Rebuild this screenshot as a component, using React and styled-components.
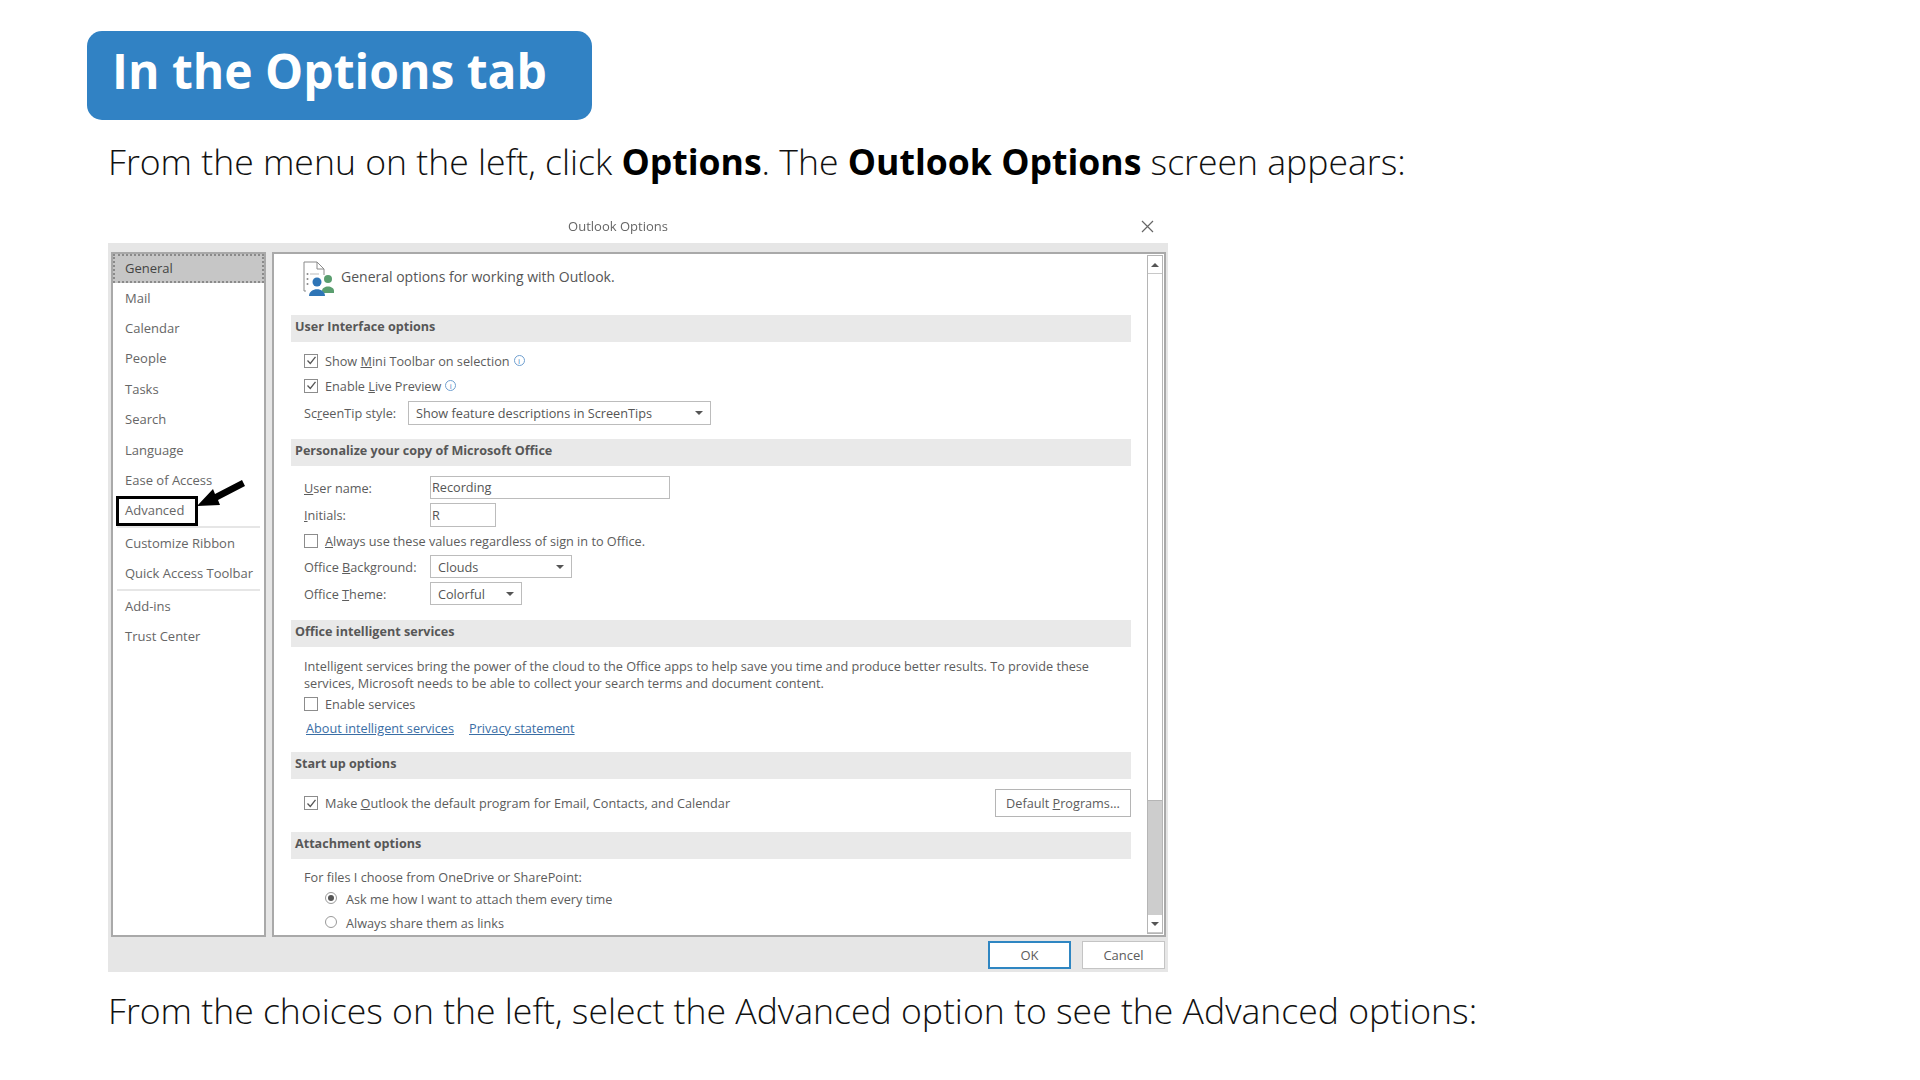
import styled, { createGlobalStyle } from 'styled-components';

const GlobalStyle = createGlobalStyle`
  html, body { margin: 0; padding: 0; background: #fff; }
  body { font-family: "Open Sans", "Liberation Sans", sans-serif; }
`;

const Page = styled.div`
  width: 1920px;
  height: 1080px;
  padding: 31px 0 0 88px;
  box-sizing: border-box;
  overflow: hidden;
`;
const Badge = styled.h1`
  width: 505px;
  height: 89px;
  margin: 0 0 0 -1px;
  padding: 0 0 11px 25px;
  box-sizing: border-box;
  display: flex;
  align-items: center;
  background: #3182c4;
  border-radius: 15px;
  color: #fff;
  font-size: 48px;
  font-weight: 700;
`;
const Lead = styled.p`
  margin: ${(p) => p.$top || 0}px 0 0 20px;
  height: 50px;
  line-height: 50px;
  font-size: 35.6px;
  font-weight: 300;
  color: #111;
  white-space: nowrap;
  b { font-weight: 700; color: #000; }
`;
const Dialog = styled.div`
  width: 1060px;
  margin: 24px 0 13px 20px;
  font-family: "Open Sans", "Noto Sans", sans-serif;
  font-size: 13px;
  color: #5c5c5c;
  filter: blur(0.5px);
`;
const TitleBar = styled.div`
  height: 33px;
  padding: 0 40px 2px 0;
  box-sizing: border-box;
  position: relative;
  display: flex;
  align-items: center;
  justify-content: center;
  font-size: 13px;
  color: #666;
  svg { position: absolute; right: 14px; top: 10px; }
`;
const Body = styled.div`
  background: #e6e6e6;
  padding: 9px 2px 0 3px;
  display: flex;
  gap: 6px;
  height: 685px;
`;
const Sidebar = styled.nav`
  width: 155px;
  box-sizing: border-box;
  border: 2px solid #a9a9a9;
  background: #fff;
  position: relative;
  flex: none;
`;
const SideItem = styled.div`
  height: ${(p) => (p.$active ? '29px' : '30.4px')};
  padding: 0 0 ${(p) => (p.$active ? '2px' : '1px')} ${(p) => (p.$active ? '10px' : '12px')};
  display: flex;
  align-items: center;
  box-sizing: border-box;
  position: relative;
  color: ${(p) => (p.$active ? '#444' : '#666')};
  ${(p) => p.$active && `
    background: #c6c6c6;
    border: 2px dotted #8a8a8a;
  `}
`;
const Divider = styled.div`
  height: 2px;
  margin: 0 4px;
  background: #e6e6e6;
`;
const Highlight = styled.div`
  position: absolute;
  left: 3px;
  top: 0;
  width: 82px;
  height: 30px;
  box-sizing: border-box;
  border: 3px solid #000;
`;
const Arrow = styled.svg`
  position: absolute;
  left: 83px;
  top: -18px;
`;
const Main = styled.main`
  flex: 1;
  min-width: 0;
  box-sizing: border-box;
  border: 2px solid #a9a9a9;
  background: #fff;
  display: flex;
  font-size: 12.7px;
`;
const Content = styled.div`
  flex: 1;
  min-width: 0;
  padding: 0 16px 0 17px;
  overflow: hidden;
`;
const Intro = styled.div`
  height: 61px;
  padding: 7px 0 0 12px;
  box-sizing: border-box;
  display: flex;
  align-items: flex-start;
  gap: 6px;
  font-size: 14px;
  color: #555;
  span { margin-top: 6px; }
`;
const SectionBar = styled.h2`
  height: 27px;
  margin: 0;
  padding: 0 0 5px 4px;
  box-sizing: border-box;
  display: flex;
  align-items: center;
  background: #e9e9e9;
  font-size: 12.6px;
  font-weight: 700;
  color: #575757;
`;
const SectionBody = styled.div`
  padding: ${(p) => p.$pad || '0'};
  padding-left: 13px;
`;
const Row = styled.div`
  height: ${(p) => p.$h}px;
  margin-top: ${(p) => p.$top || 0}px;
  display: flex;
  align-items: center;
  white-space: nowrap;
  padding-left: ${(p) => p.$indent || 0}px;
`;
const Box = styled.span`
  width: 14px;
  height: 14px;
  box-sizing: border-box;
  border: 1.5px solid #8c8c8c;
  margin-right: 7px;
  flex: none;
  display: flex;
  align-items: center;
  justify-content: center;
`;
const Radio = styled.span`
  width: 12px;
  height: 12px;
  box-sizing: border-box;
  border: 1px solid #999;
  border-radius: 50%;
  margin: -2px 9px 0 0;
  flex: none;
  display: flex;
  align-items: center;
  justify-content: center;
  &::after {
    content: '';
    width: 6px;
    height: 6px;
    border-radius: 50%;
    background: ${(p) => (p.$on ? '#555' : 'transparent')};
  }
`;
const Info = styled.span`
  display: inline-block;
  vertical-align: 2px;
  width: 11px;
  height: 11px;
  margin-left: 4px;
  box-sizing: border-box;
  border: 1px solid #6f9fd0;
  border-radius: 50%;
  color: #3f7fc0;
  font-size: 8px;
  line-height: 9px;
  text-align: center;
`;
const FieldLabel = styled.span`
  width: ${(p) => p.$w}px;
  flex: none;
`;
const Input = styled.div`
  width: ${(p) => p.$w}px;
  height: 100%;
  box-sizing: border-box;
  border: 1.5px solid #bcbcbc;
  padding: 0 0 1px 1px;
  display: flex;
  align-items: center;
  color: #555;
`;
const Select = styled(Input)`
  padding: 0 7px;
  justify-content: space-between;
  &::after {
    content: '';
    border: 4px solid transparent;
    border-top: 4px solid #555;
    border-bottom: 0;
  }
`;
const Para = styled.div`
  line-height: 17px;
  white-space: nowrap;
`;
const Link = styled.a`
  color: #3a6ea5;
  text-decoration: underline;
  margin: 0 13px 0 2px;
`;
const DefaultButton = styled.div`
  width: 136px;
  height: 100%;
  margin-left: auto;
  box-sizing: border-box;
  border: 1.5px solid #b5b5b5;
  display: flex;
  align-items: center;
  justify-content: center;
`;
const ScrollBar = styled.div`
  width: 16px;
  margin: 1px 1px 1px 0;
  flex: none;
  background: #cdcdcd;
  border: 1px solid #b5b5b5;
  box-sizing: border-box;
  display: flex;
  flex-direction: column;
`;
const ScrollBtn = styled.div`
  height: 17px;
  background: #fff;
  display: flex;
  align-items: center;
  justify-content: center;
  border-bottom: 1px solid #c8c8c8;
  &::after {
    content: '';
    border: 4px solid transparent;
    ${(p) => (p.$down ? 'border-top: 4px solid #555; border-bottom: 0;' : 'border-bottom: 4px solid #555; border-top: 0;')}
  }
`;
const Thumb = styled.div`
  height: 526px;
  background: #fff;
  border-bottom: 1px solid #b5b5b5;
  margin-bottom: auto;
`;
const Footer = styled.div`
  background: #e6e6e6;
  height: 35px;
  padding: 4px 3px 3px 0;
  box-sizing: border-box;
  display: flex;
  justify-content: flex-end;
  gap: 11px;
`;
const FootButton = styled.div`
  width: 83px;
  box-sizing: border-box;
  background: #fff;
  border: ${(p) => (p.$primary ? '2px solid #2f86c2' : '1.5px solid #c4c4c4')};
  display: flex;
  align-items: center;
  justify-content: center;
`;

const Check = () => (
  <svg width="11" height="11" viewBox="0 0 11 11" fill="none">
    <path d="M1.5 5.5 L4.3 8.5 L9.5 1.8" stroke="#555" strokeWidth="1.3" />
  </svg>
);

const CheckRow = ({ h, on, children }) => (
  <Row $h={h}>
    <Box>{on && <Check />}</Box>
    <span>{children}</span>
  </Row>
);

const PeopleIcon = () => (
  <svg width="32" height="36" viewBox="0 0 32 36" fill="none">
    <path d="M3 30 H1 V1 H14 L21 8 V14 M14 1 V8 H21" stroke="#8a8a8a" strokeWidth="1" />
    <circle cx="4.5" cy="13" r="1" fill="#888" />
    <circle cx="4.5" cy="18" r="1" fill="#888" />
    <circle cx="4.5" cy="23" r="1" fill="#888" />
    <path d="M7 13 H16" stroke="#bbb" strokeWidth="1" />
    <circle cx="25" cy="18" r="4" fill="#5a9e6f" />
    <path d="M19 30 C19 24 31 24 31 30 L31 32 L21 32 Z" fill="#5a9e6f" />
    <circle cx="14" cy="21" r="4.5" fill="#2e75b6" />
    <path d="M6 35 C6 26 22 26 22 35 Z" fill="#2e75b6" />
  </svg>
);

const sideTop = ['Mail', 'Calendar', 'People', 'Tasks', 'Search', 'Language', 'Ease of Access'];

export default function App() {
  return (
    <Page>
      <GlobalStyle />
      <Badge>In the Options tab</Badge>
      <Lead $top={16}>
        From the menu on the left, click <b>Options</b>. The <b>Outlook Options</b> screen appears:
      </Lead>
      <Dialog>
        <TitleBar>
          Outlook Options
          <svg width="13" height="13" viewBox="0 0 13 13">
            <path d="M1 1 L12 12 M12 1 L1 12" stroke="#666" strokeWidth="1.2" />
          </svg>
        </TitleBar>
        <Body>
          <Sidebar>
            <SideItem $active>General</SideItem>
            {sideTop.map((t) => <SideItem key={t}>{t}</SideItem>)}
            <SideItem>
              Advanced
              <Highlight />
              <Arrow width="50" height="32" viewBox="0 0 50 32">
                <path d="M46 2 L19 16 L17 11 L1 28 L24 27 L22 22 L49 8 Z" fill="#000" />
              </Arrow>
            </SideItem>
            <Divider />
            <SideItem>Customize Ribbon</SideItem>
            <SideItem>Quick Access Toolbar</SideItem>
            <Divider />
            <SideItem>Add-ins</SideItem>
            <SideItem>Trust Center</SideItem>
          </Sidebar>
          <Main>
            <Content>
              <Intro>
                <PeopleIcon />
                <span>General options for working with Outlook.</span>
              </Intro>

              <SectionBar>User Interface options</SectionBar>
              <SectionBody $pad="6px 0 14px">
                <CheckRow h={25} on>Show <u>M</u>ini Toolbar on selection<Info>i</Info></CheckRow>
                <CheckRow h={25} on>Enable <u>L</u>ive Preview<Info>i</Info></CheckRow>
                <Row $h={24} $top={3}>
                  <FieldLabel $w={104}>Sc<u>r</u>eenTip style:</FieldLabel>
                  <Select $w={303}>Show feature descriptions in ScreenTips</Select>
                </Row>
              </SectionBody>

              <SectionBar>Personalize your copy of Microsoft Office</SectionBar>
              <SectionBody $pad="10px 0 15px">
                <Row $h={23}>
                  <FieldLabel $w={126}><u>U</u>ser name:</FieldLabel>
                  <Input $w={240}>Recording</Input>
                </Row>
                <Row $h={24} $top={4}>
                  <FieldLabel $w={126}><u>I</u>nitials:</FieldLabel>
                  <Input $w={66}>R</Input>
                </Row>
                <CheckRow h={28}><u>A</u>lways use these values regardless of sign in to Office.</CheckRow>
                <Row $h={23}>
                  <FieldLabel $w={126}>Office <u>B</u>ackground:</FieldLabel>
                  <Select $w={142}>Clouds</Select>
                </Row>
                <Row $h={23} $top={4}>
                  <FieldLabel $w={126}>Office <u>T</u>heme:</FieldLabel>
                  <Select $w={92}>Colorful</Select>
                </Row>
              </SectionBody>

              <SectionBar>Office intelligent services</SectionBar>
              <SectionBody $pad="11px 0 12px">
                <Para>
                  Intelligent services bring the power of the cloud to the Office apps to help save you time and produce better results. To provide these
                  <br />
                  services, Microsoft needs to be able to collect your search terms and document content.
                </Para>
                <CheckRow h={24}>Enable services</CheckRow>
                <Row $h={24}>
                  <Link>About intelligent services</Link>
                  <Link>Privacy statement</Link>
                </Row>
              </SectionBody>

              <SectionBar>Start up options</SectionBar>
              <SectionBody $pad="10px 0 15px">
                <Row $h={28}>
                  <Box><Check /></Box>
                  <span>Make <u>O</u>utlook the default program for Email, Contacts, and Calendar</span>
                  <DefaultButton><span>Default <u>P</u>rograms...</span></DefaultButton>
                </Row>
              </SectionBody>

              <SectionBar>Attachment options</SectionBar>
              <SectionBody $pad="6px 0 0">
                <Row $h={24}>For files I choose from OneDrive or SharePoint:</Row>
                <Row $h={20} $indent={21}><Radio $on />Ask me how I want to attach them every time</Row>
                <Row $h={24} $top={2} $indent={21}><Radio />Always share them as links</Row>
              </SectionBody>
            </Content>
            <ScrollBar>
              <ScrollBtn />
              <Thumb />
              <ScrollBtn $down />
            </ScrollBar>
          </Main>
        </Body>
        <Footer>
          <FootButton $primary>OK</FootButton>
          <FootButton>Cancel</FootButton>
        </Footer>
      </Dialog>
      <Lead>From the choices on the left, select the Advanced option to see the Advanced options:</Lead>
    </Page>
  );
}
